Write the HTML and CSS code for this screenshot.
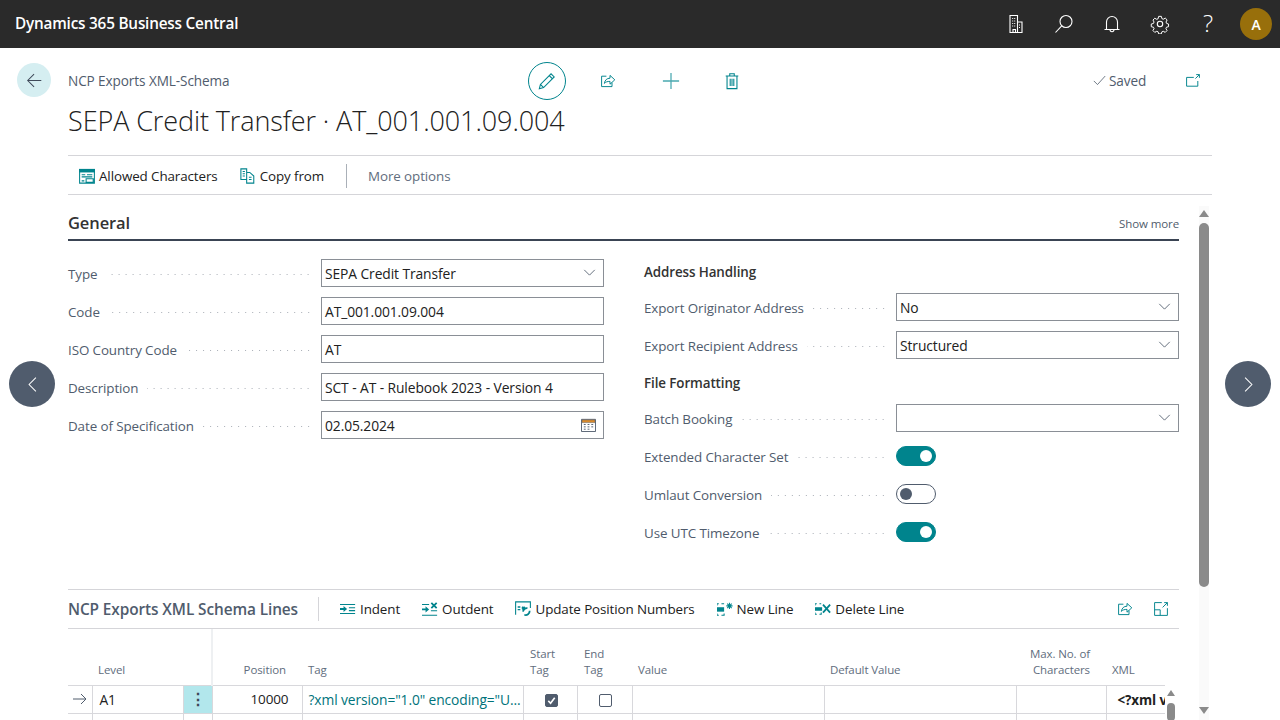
FILE: index.html
```html
<!DOCTYPE html>
<html lang="en">
<head>
<meta charset="utf-8">
<title>SEPA Credit Transfer</title>
<link rel="stylesheet" href="styles.css">
</head>
<body>
<header class="topbar">
  <div class="brand">Dynamics 365 Business Central</div>
  <nav class="topicons">
    <svg class="ti" viewBox="0 0 20 20"><path d="M4 1.500h7.500v17H4zM11.500 8H16v10.500h-4.500M7 18.500v-3h2.500v3M6.200 4.500h1M8.200 4.500h1M6.200 7h1M8.200 7h1M6.200 9.500h1M8.200 9.500h1M6.200 12h1M8.200 12h1M13 11h1M13 13.500h1"/></svg>
    <svg class="ti" viewBox="0 0 20 20"><circle cx="12" cy="7.500" r="6"/><path d="M7.700 11.800L1.500 18.500"/></svg>
    <svg class="ti" viewBox="0 0 20 20"><path d="M2.500 15.500h15M4.500 15.500V8a5.500 5.500 0 0 1 11 0v7.500M8 15.500c0 3 4 3 4 0"/></svg>
    <svg class="ti" viewBox="0 0 20 20"><circle cx="10" cy="10" r="2.700"/><path d="M8.500 1.500h3l.6 2.500 1.500.7 2.300-1.200 2 2-1.200 2.300.7 1.600 2.100.6v3l-2.300.6-.6 1.500 1.200 2.200-2 2-2.200-1.200-1.600.7-.5 2.200h-3l-.6-2.300-1.500-.6-2.200 1.200-2-2 1.200-2.200-.7-1.500-2.400-.6v-3l2.400-.6.700-1.600-1.200-2.200 2-2 2.200 1.200 1.500-.7z" transform="translate(1 1) scale(.9)"/></svg>
    <span class="help">?</span>
    <span class="avatar">A</span>
  </nav>
</header>

<main class="page">
  <button class="backbtn" aria-label="Back">
    <svg viewBox="0 0 20 20" class="backicon"><path d="M18 10H2M9.500 2.500L2 10l7.500 7.500"/></svg>
  </button>
  <div class="head">
    <div class="headrow">
      <div class="crumb">NCP Exports XML-Schema</div>
      <div class="actions">
        <span class="editbtn"><svg viewBox="0 0 20 20" class="i18"><path d="M1.500 18.500l1.200-4.700L14.500 2l3.500 3.500L6.200 17.300zM12.500 4l3.500 3.500M2.700 13.800l3.500 3.500"/></svg></span>
        <svg viewBox="0 0 20 20" class="i16 a1"><path d="M8 4H2v13h13v-5M5.500 13c.5-4 3-6.500 7-6.500V3l6 5.500-6 5.500v-3.500c-3 0-5.500.5-7 2.500z"/></svg>
        <svg viewBox="0 0 20 20" class="i18 a2"><path d="M10 1v18M1 10h18"/></svg>
        <svg viewBox="0 0 20 20" class="i18 a3"><path d="M3 4.500h14M7.500 4.500V2h5v2.500M4.500 4.500v14h11v-14M8 7.500v8M10 7.500v8M12 7.500v8"/></svg>
      </div>
      <div class="saved">
        <svg viewBox="0 0 16 16" class="check"><path d="M1 8.500l4.500 4.500L15 2.500"/></svg>
        <span>Saved</span>
      </div>
      <svg viewBox="0 0 20 20" class="i16 popout"><path d="M11 5.500H2v11h14V10M13 7l5-5M14 2h4v4"/></svg>
    </div>
    <h1 class="title">SEPA Credit Transfer · AT_001.001.09.004</h1>
    <div class="actionbar">
      <span class="act"><svg viewBox="0 0 18 18" class="i16"><path class="fillt" d="M0 1h18v4H0z"/><path d="M.700 3v14h16.600V3M3 7.500h4M9 7.500h6M3 10h12M3 14.500h3M8 12h8v4H8z"/></svg>Allowed Characters</span>
      <span class="act"><svg viewBox="0 0 18 18" class="i16"><path d="M1 1h6.500v12H1zM3 4h2.500M3 6.500h2.500M3 9h2.500M7.500 5H11l4.500 4v8h-8zM10 10.500h3M10 13h3"/></svg>Copy from</span>
      <span class="vsep"></span>
      <span class="more">More options</span>
    </div>
  </div>

  <section class="content">
    <div class="general">
      <div class="sechead">
        <h2>General</h2>
        <span class="showmore">Show more</span>
      </div>
      <div class="cols">
        <div class="col">
          <div class="field"><label>Type</label><i class="dots"></i><div class="box">SEPA Credit Transfer<svg viewBox="0 0 14 8" class="chev"><path d="M1 1l6 6 6-6"/></svg></div></div>
          <div class="field"><label>Code</label><i class="dots"></i><div class="box">AT_001.001.09.004</div></div>
          <div class="field"><label>ISO Country Code</label><i class="dots"></i><div class="box">AT</div></div>
          <div class="field"><label>Description</label><i class="dots"></i><div class="box">SCT - AT - Rulebook 2023 - Version 4</div></div>
          <div class="field"><label>Date of Specification</label><i class="dots"></i><div class="box">02.05.2024<svg viewBox="0 0 16 16" class="cal"><path class="calb" d="M.500 2.500h15v13H.500z"/><path class="calt" d="M1 3h14v3H1z"/><path class="calg" d="M3 8h2M7 8h2M11 8h2M3 10.500h2M7 10.500h2M11 10.500h2M3 13h2M7 13h2"/></svg></div></div>
        </div>
        <div class="col colr">
          <h3>Address Handling</h3>
          <div class="field"><label>Export Originator Address</label><i class="dots"></i><div class="box">No<svg viewBox="0 0 14 8" class="chev"><path d="M1 1l6 6 6-6"/></svg></div></div>
          <div class="field"><label>Export Recipient Address</label><i class="dots"></i><div class="box">Structured<svg viewBox="0 0 14 8" class="chev"><path d="M1 1l6 6 6-6"/></svg></div></div>
          <h3 class="h3b">File Formatting</h3>
          <div class="field"><label>Batch Booking</label><i class="dots"></i><div class="box"><svg viewBox="0 0 14 8" class="chev"><path d="M1 1l6 6 6-6"/></svg></div></div>
          <div class="field"><label>Extended Character Set</label><i class="dots"></i><div class="boxless"><span class="toggle on"></span></div></div>
          <div class="field"><label>Umlaut Conversion</label><i class="dots"></i><div class="boxless"><span class="toggle"></span></div></div>
          <div class="field"><label>Use UTC Timezone</label><i class="dots"></i><div class="boxless"><span class="toggle on"></span></div></div>
        </div>
      </div>
    </div>

    <div class="lines">
      <div class="linesbar">
        <h2 class="linestitle">NCP Exports XML Schema Lines</h2>
        <span class="vsep2"></span>
        <span class="act2"><svg viewBox="0 0 18 16" class="i16"><path class="fillt" d="M0 7h4V4.500L8 8l-4 3.500V9H0z"/><path d="M0 3h17M0 13h17M10 6.500h7M10 9.800h7"/></svg>Indent</span>
        <span class="act2"><svg viewBox="0 0 18 16" class="i16"><path class="fillt" d="M0 7.500h4V5l4 3.500L4 12V9.500H0z"/><path d="M0 15h17M0 3h8M10 10h7"/><path class="thick" d="M10.500 1l6 6M16.500 1l-6 6"/></svg>Outdent</span>
        <span class="act2"><svg viewBox="0 0 18 18" class="i16"><path d="M.700 15.500V1h16.600v7"/><path class="fillt" d="M3 6h3v1.500H3zM3 9h3v1.500H3z"/><path class="thick" d="M8 6.500l3 3M11 6.500l-3 3M10.500 15.500a4.500 4.500 0 0 0 6-4.500M9 12a4.500 4.500 0 0 1 5-4"/></svg>Update Position Numbers</span>
        <span class="act2"><svg viewBox="0 0 18 16" class="i16"><path class="fillt" d="M0 6h8v5H0z"/><path d="M2 2H0v2M8 2H5M0 13v2h2M5 15h3v-2M14 1v7M10.500 4.500h7M11.500 2l5 5M16.500 2l-5 5"/></svg>New Line</span>
        <span class="act2"><svg viewBox="0 0 18 16" class="i16"><path class="fillt" d="M0 6h8v4H0z"/><path d="M2 2H0v2M7 2H5M0 12v2h2M5 14h2v-2"/><path class="thick" d="M9 3l8 9M17 3l-8 9"/></svg>Delete Line</span>
        <span class="barright">
          <svg viewBox="0 0 20 20" class="i16"><path d="M8 4H2v13h13v-5M5.500 13c.5-4 3-6.500 7-6.500V3l6 5.500-6 5.500v-3.500c-3 0-5.500.5-7 2.500z"/></svg>
          <svg viewBox="0 0 20 20" class="i16"><path d="M11 2H2v16h16V9M2 11h7v7M12 8l6-6M14 2h4v4"/></svg>
        </span>
      </div>
      <div class="tablewrap">
        <table class="grid">
          <colgroup><col class="c1"><col class="c2"><col class="c3"><col class="c4"><col class="c5"><col class="c6"><col class="c7"><col class="c8"><col class="c9"><col class="c10"><col class="c11"></colgroup>
          <thead>
            <tr>
              <th></th><th class="tl">Level</th><th class="fz"></th><th class="tr">Position</th><th class="tl">Tag</th><th class="tl st">Start<br>Tag</th><th class="tl st">End<br>Tag</th><th class="tl">Value</th><th class="tl">Default Value</th><th class="tr">Max. No. of<br>Characters</th><th class="tl">XML</th>
            </tr>
          </thead>
          <tbody>
            <tr>
              <td class="cc"><svg viewBox="0 0 14 12" class="rowarrow"><path d="M0 6h13M8 1l5 5-5 5"/></svg></td>
              <td class="tl lvl">A1</td>
              <td class="dotcell">⋮</td>
              <td class="tr num">10000</td>
              <td class="tl link">?xml version="1.0" encoding="U...</td>
              <td class="cc chk"><span class="cb checked"><svg viewBox="0 0 12 12"><path d="M2.500 6.500l2.500 2.500 4.500-6"/></svg></span></td>
              <td class="cc chk"><span class="cb"></span></td>
              <td></td><td></td><td></td>
              <td class="xml">&lt;?xml v</td>
            </tr>
            <tr class="empty"><td></td><td></td><td></td><td></td><td></td><td></td><td></td><td></td><td></td><td></td><td></td></tr>
          </tbody>
        </table>
        <div class="innerscroll"><span class="up"></span><span class="thumb"></span></div>
      </div>
    </div>
  </section>

  <div class="pagescroll"><span class="up"></span><span class="thumb"></span><span class="down"></span></div>
</main>

<button class="navbtn prev" aria-label="Previous"><svg viewBox="0 0 12 20"><path d="M10 2L2 10l8 8"/></svg></button>
<button class="navbtn next" aria-label="Next"><svg viewBox="0 0 12 20"><path d="M2 2l8 8-8 8"/></svg></button>
</body>
</html>
```

FILE: styles.css
```css
* { box-sizing: border-box; }
html, body { margin: 0; height: 720px; overflow: hidden; }
body { font-family: "Open Sans", "Liberation Sans", sans-serif; font-size: 13.4px; letter-spacing: -.1px; color: #212121; background: #fff; position: relative; }
svg { fill: none; stroke: #00848d; stroke-width: 1.2; display: block; }

.topbar { height: 48px; background: #2a2a2a; display: flex; align-items: center; justify-content: space-between; padding: 0 8px 0 15px; }
.brand { color: #fff; font-size: 15.3px; font-weight: 600; letter-spacing: -.2px; padding-bottom: 3px; }
.topicons { display: flex; align-items: center; }
.ti { width: 20px; height: 20px; margin-right: 28px; stroke: #fff; stroke-width: 1.1; }
.help { width: 20px; margin-right: 22px; color: #fff; font-size: 24px; line-height: 28px; font-weight: 300; text-align: center; padding-bottom: 3px; }
.avatar { width: 32px; height: 32px; border-radius: 50%; background: #986f0b; color: #fff; font-weight: 600; font-size: 14px; display: flex; align-items: center; justify-content: center; }

.page { position: relative; height: 672px; padding-left: 68px; }
.backbtn { position: absolute; left: 17px; top: 15px; width: 34px; height: 34px; border: 0; border-radius: 50%; background: #d5eef1; padding: 0; display: flex; align-items: center; justify-content: center; }
.backicon { width: 17px; height: 17px; stroke: #3f4a5a; }

.head { width: 1144px; }
.headrow { height: 66px; display: flex; align-items: center; }
.crumb { width: 460px; color: #505c6d; font-size: 13.6px; padding-bottom: 2px; }
.actions { display: flex; align-items: center; width: 564px; }
.editbtn { width: 38px; height: 38px; border: 1px solid #00848d; border-radius: 50%; display: flex; align-items: center; justify-content: center; }
.i18 { width: 18px; height: 18px; }
.a1 { margin-left: 34px; }
.a2 { margin-left: 46px; stroke: #4aa9b0; stroke-width: 1.4; }
.a3 { margin-left: 43px; }
.saved { display: flex; align-items: center; gap: 2px; color: #505c6d; width: 93px; font-size: 13.6px; padding-bottom: 2px; }
.check { width: 15px; height: 13px; stroke: #505c6d; stroke-width: 1; }
.title { margin: -8px 0 0; height: 49px; font-size: 27px; line-height: 30px; font-weight: 300; color: #212121; letter-spacing: -.1px; }
.actionbar { height: 40px; border-top: 1px solid #d5d5d9; border-bottom: 1px solid #d5d5d9; display: flex; align-items: center; padding: 1px 0 0 11px; }
.act { display: flex; align-items: center; gap: 4px; margin-right: 22px; }
.i16 { width: 16px; height: 16px; flex: none; }
.fillt { fill: #00848d; stroke: none; }
.thick { stroke-width: 2; }
.vsep { width: 1px; height: 24px; background: #aab0b8; margin: 0 21px 0 0; }
.more { color: #616d7d; }

.content { width: 1111px; }
.general { height: 394px; }
.sechead { height: 46px; border-bottom: 2px solid #3a4453; display: flex; align-items: center; justify-content: space-between; padding-top: 10px; }
.sechead h2 { margin: 0; font-size: 16.500px; font-weight: 600; color: #333; }
.showmore { font-size: 11.500px; color: #505c6d; padding-top: 2px; }
.cols { display: flex; padding-top: 14px; gap: 40px; }
.col { width: 536px; }
.colr { width: 535px; }
.field { display: flex; align-items: center; height: 38px; }
.field label { color: #505c6d; white-space: nowrap; padding-right: 9px; }
.dots { flex: 1; height: 3px; margin-right: 9px; background-image: radial-gradient(circle, #a9aeb6 .7px, transparent 1px); background-size: 7px 3px; background-repeat: repeat-x; background-position: right center; }
.box { flex: none; width: 283px; height: 28px; margin-bottom: 3px; border: 1px solid #8a8f96; padding: 1px 3px 0; display: flex; align-items: center; justify-content: space-between; color: #212121; font-size: 13.85px; }
.boxless { flex: none; width: 283px; margin-bottom: 2px; }
.chev { width: 13px; height: 7px; stroke: #505c6d; margin: 0 4px 2px auto; stroke-width: 1; }
.cal { width: 15px; height: 15px; margin: 0 4px 1px 0; }
.calb { stroke: #505c6d; stroke-width: 1; }
.calt { fill: #d98a2c; stroke: #505c6d; stroke-width: .5; }
.calg { stroke: #505c6d; stroke-width: 1; }
.colr h3 { margin: 0; height: 34px; font-size: 13.4px; font-weight: 600; color: #333; line-height: 35px; }
.colr .h3b { height: 35px; line-height: 37px; }
.toggle { display: block; width: 40px; height: 20px; border: 1px solid #505c6d; border-radius: 10px; position: relative; background: #fff; }
.toggle::after { content: ""; position: absolute; left: 3px; top: 3px; width: 12px; height: 12px; border-radius: 50%; background: #505c6d; }
.toggle.on { background: #00848d; border-color: #00848d; }
.toggle.on::after { left: auto; right: 3px; background: #fff; }

.lines { border-top: 1px solid #d5d5d9; }
.linesbar { height: 39px; border-bottom: 1px solid #d5d5d9; display: flex; align-items: center; }
.linestitle { margin: 0; font-size: 15.4px; font-weight: 600; color: #505c6d; letter-spacing: -.1px; }
.vsep2 { width: 1px; height: 24px; background: #d5d5d9; margin: 0 21px 0 20px; }
.act2 { display: flex; align-items: center; gap: 4px; margin-right: 22px; }
.barright { margin-left: auto; display: flex; gap: 20px; padding-right: 10px; }

.tablewrap { position: relative; height: 92px; overflow: hidden; }
.grid { table-layout: fixed; border-collapse: collapse; width: 1097px; }
.c1 { width: 24px; } .c2 { width: 91px; } .c3 { width: 29px; } .c4 { width: 90px; } .c5 { width: 221px; } .c6 { width: 54px; } .c7 { width: 55px; } .c8 { width: 192px; } .c9 { width: 192px; } .c10 { width: 90px; } .c11 { width: 59px; }
.grid th { height: 56px; vertical-align: bottom; font-weight: 400; font-size: 11.500px; line-height: 16px; color: #616d7d; padding: 0 5px 7px 6px; white-space: nowrap; }
.grid th.tr { padding-right: 16px; }
.grid th.st { padding-left: 7px; }
.grid th.fz { border-right: 2px solid #eef0f2; }
.grid td { height: 28px; border: 1px solid #d8d8dc; padding: 0 6px 0 6px; white-space: nowrap; overflow: hidden; }
.grid td:first-child { border-left: 0; }
.grid td:last-child { border-right: 0; }
.tl { text-align: left; }
.tr { text-align: right; }
.cc { text-align: center; }
.grid td.cc { padding: 0; }
.grid td.chk { padding-left: 2px; }
.grid td.lvl { padding: 1px 6px 0 7px; font-size: 13.8px; }
.rowarrow { width: 14px; height: 12px; margin: 0 auto; stroke: #505c6d; stroke-width: 1; }
.grid td.dotcell { background: #b2e7ec; text-align: center; padding: 0; font-size: 16px; font-weight: 700; color: #3f4a5a; }
.grid td.link { color: #00737b; font-size: 13.8px; letter-spacing: -.1px; padding-right: 0; }
.grid td.num { padding-right: 13px; font-size: 13.500px; }
.grid td.xml { font-weight: 700; padding: 1px 0 0 11px; }
.cb { display: inline-block; width: 13px; height: 13px; border: 1px solid #505c6d; border-radius: 2px; vertical-align: middle; }
.cb.checked { background: #505c6d; }
.cb svg { width: 11px; height: 11px; stroke: #fff; stroke-width: 1.8; }

.innerscroll { position: absolute; left: 1097px; top: 0; width: 14px; height: 100%; background: #fff; }
.innerscroll .up { position: absolute; left: 2px; top: 61px; border: 4px solid transparent; border-top: 0; border-bottom: 6px solid #8a8a8a; }
.innerscroll .thumb { position: absolute; left: 2px; top: 74px; width: 8px; height: 18px; border-radius: 4px; background: #8a8a8a; }
.pagescroll { position: absolute; left: 1199px; top: 158px; width: 10px; height: 514px; background: #fafafa; }
.pagescroll .up { position: absolute; left: 0; top: 4px; border: 5px solid transparent; border-top: 0; border-bottom: 7px solid #8a8a8a; }
.pagescroll .thumb { position: absolute; left: 0; top: 17px; width: 10px; height: 364px; border-radius: 5px; background: #8a8a8a; }
.pagescroll .down { position: absolute; left: 0; top: 501px; border: 5px solid transparent; border-bottom: 0; border-top: 7px solid #8a8a8a; }

.navbtn { position: absolute; top: 361px; width: 46px; height: 46px; border: 0; border-radius: 50%; background: #505c6d; padding: 0; display: flex; align-items: center; justify-content: center; }
.navbtn svg { width: 11px; height: 17px; stroke: #fff; stroke-width: 1.2; }
.prev { left: 9px; }
.next { left: 1225px; }
```
